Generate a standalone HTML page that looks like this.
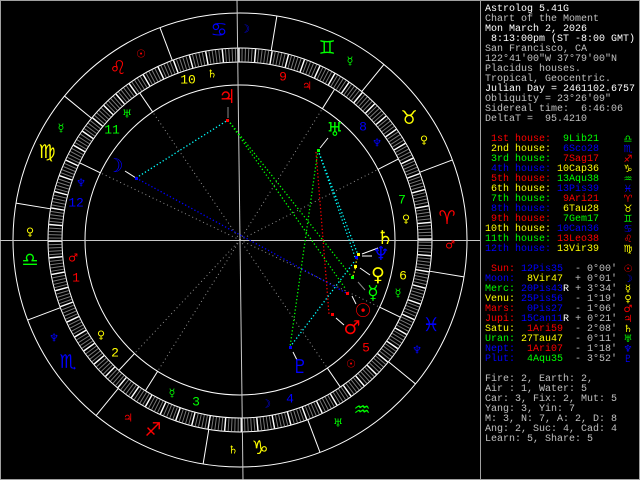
<!DOCTYPE html>
<html><head><meta charset="utf-8"><style>
html,body{margin:0;padding:0;background:#000;width:640px;height:480px;overflow:hidden}
svg{position:absolute;left:0;top:0}
.p{position:absolute;left:485px;font-family:"Liberation Mono",monospace;font-size:10px;line-height:10px;white-space:pre;color:#c0c0c0}
.w{color:#fff}.r{color:#f00}.y{color:#ff0}.g{color:#0f0}.b{color:#00f}
.gl{font-family:"DejaVu Sans",sans-serif;font-size:10px;position:absolute;left:622px;width:12px;text-align:center}
</style></head><body>
<svg width="640" height="480" xmlns="http://www.w3.org/2000/svg">
<rect x="0.5" y="0.5" width="639" height="479" fill="none" stroke="#a0a0a0"/>
<line x1="480.5" y1="0" x2="480.5" y2="480" stroke="#a0a0a0"/>
<g transform="translate(240,240)" fill="none">
<circle r="227" stroke="#fff"/>
<circle r="192" stroke="#fff"/>
<circle r="178" stroke="#fff"/>
<circle r="155" stroke="#fff"/>
<g transform="rotate(9.35)">
<circle r="185" stroke="#777" stroke-width="13" stroke-dasharray="1 2.2289"/>
<circle r="185" stroke="#fff" stroke-width="13" stroke-dasharray="1.4 14.7445"/>
</g>
<g stroke="#fff">
<line x1="192" x2="227" transform="rotate(9.35)"/><line x1="192" x2="227" transform="rotate(-20.65)"/>
<line x1="192" x2="227" transform="rotate(-50.65)"/><line x1="192" x2="227" transform="rotate(-80.65)"/>
<line x1="192" x2="227" transform="rotate(-110.65)"/><line x1="192" x2="227" transform="rotate(-140.65)"/>
<line x1="192" x2="227" transform="rotate(-170.65)"/><line x1="192" x2="227" transform="rotate(-200.65)"/>
<line x1="192" x2="227" transform="rotate(-230.65)"/><line x1="192" x2="227" transform="rotate(-260.65)"/>
<line x1="192" x2="227" transform="rotate(-290.65)"/><line x1="192" x2="227" transform="rotate(-320.65)"/>
<line x1="155" x2="178" transform="rotate(-227.1)"/><line x1="155" x2="178" transform="rotate(-237.9)"/>
<line x1="155" x2="178" transform="rotate(-304.3)"/><line x1="155" x2="178" transform="rotate(-334.3)"/>
<line x1="155" x2="178" transform="rotate(-27.1)"/><line x1="155" x2="178" transform="rotate(-57.9)"/>
<line x1="155" x2="178" transform="rotate(-124.3)"/><line x1="155" x2="178" transform="rotate(-154.3)"/>
</g>
<g stroke="#909090" stroke-dasharray="1 3">
<line x1="0" x2="155" transform="rotate(-227.1)"/><line x1="0" x2="155" transform="rotate(-237.9)"/>
<line x1="0" x2="155" transform="rotate(-304.3)"/><line x1="0" x2="155" transform="rotate(-334.3)"/>
<line x1="0" x2="155" transform="rotate(-27.1)"/><line x1="0" x2="155" transform="rotate(-57.9)"/>
<line x1="0" x2="155" transform="rotate(-124.3)"/><line x1="0" x2="155" transform="rotate(-154.3)"/>
</g>
</g>
<line x1="0" y1="240.5" x2="480" y2="240.5" stroke="#c8c8c8"/>
<line x1="237" y1="0" x2="243" y2="480" stroke="#c8c8c8"/>
<g fill="none" stroke-width="1.3" stroke-dasharray="1.3 2.2">
<line x1="136" y1="178" x2="228" y2="120" stroke="#0ff"/>
<line x1="136" y1="178" x2="348" y2="294" stroke="#00f"/>
<line x1="228" y1="120" x2="352" y2="277" stroke="#0f0"/>
<line x1="228" y1="120" x2="345" y2="288" stroke="#0f0"/>
<line x1="318" y1="150" x2="358" y2="255" stroke="#0ff"/>
<line x1="318" y1="150" x2="355" y2="257" stroke="#0ff"/>
<line x1="316" y1="152" x2="329" y2="314" stroke="#f00"/>
<line x1="318" y1="150" x2="290" y2="347" stroke="#0f0"/>
<line x1="290" y1="347" x2="354" y2="262" stroke="#0ff"/>
<line x1="355" y1="266" x2="358" y2="256" stroke="#ff0"/>
<line x1="353" y1="276" x2="356" y2="266" stroke="#ff0"/>
</g>
<g stroke="#fff" fill="none">
<line x1="136" y1="178" x2="125" y2="171"/>
<line x1="320" y1="148" x2="328" y2="138"/>
<line x1="228" y1="118" x2="228" y2="107" stroke="#888"/>
<line x1="362" y1="254" x2="378" y2="248"/>
<line x1="362" y1="256" x2="372" y2="256"/>
<line x1="360" y1="268" x2="370" y2="275"/>
<line x1="358" y1="282" x2="365" y2="290" stroke="#888"/>
<line x1="352" y1="296" x2="356" y2="304"/>
<line x1="336" y1="318" x2="344" y2="325"/>
<line x1="293" y1="352" x2="297" y2="360"/>
</g>
<g>
<rect x="226" y="119" width="3" height="3" fill="#f00"/><rect x="135" y="177" width="3" height="3" fill="#00f"/>
<rect x="317" y="149" width="3" height="3" fill="#0f0"/><rect x="346" y="292" width="3" height="3" fill="#f00"/>
<rect x="331" y="313" width="3" height="3" fill="#f00"/><rect x="289" y="346" width="3" height="3" fill="#00f"/>
<rect x="357" y="253" width="3" height="3" fill="#ff0"/><rect x="355" y="256" width="3" height="3" fill="#00f"/>
<rect x="354" y="265" width="3" height="3" fill="#ff0"/><rect x="351" y="276" width="3" height="3" fill="#0f0"/>
</g>
<g font-family="DejaVu Sans, sans-serif" text-anchor="middle" dominant-baseline="central">
<g font-size="19">
<text x="219" y="30" fill="#00f">♋&#xFE0E;</text><text x="118" y="68" fill="#f00">♌&#xFE0E;</text>
<text x="47" y="152" fill="#ff0">♍&#xFE0E;</text><text x="30" y="260" fill="#0f0">♎&#xFE0E;</text>
<text x="68" y="362" fill="#00f">♏&#xFE0E;</text><text x="153" y="430" fill="#f00">♐&#xFE0E;</text>
<text x="260" y="448" fill="#ff0">♑&#xFE0E;</text><text x="362" y="410" fill="#0f0">♒&#xFE0E;</text>
<text x="431" y="325" fill="#00f">♓&#xFE0E;</text><text x="447" y="218" fill="#f00">♈&#xFE0E;</text>
<text x="409" y="118" fill="#ff0">♉&#xFE0E;</text><text x="327" y="48" fill="#0f0">♊&#xFE0E;</text>
</g>
<g font-size="19">
<text x="227" y="97" fill="#f00">♃&#xFE0E;</text><text x="115" y="166" fill="#00f">☽&#xFE0E;</text>
<text x="335" y="130" fill="#0f0">♅&#xFE0E;</text><text x="385" y="238" fill="#ff0">♄&#xFE0E;</text>
<text x="381" y="254" fill="#00f">♆&#xFE0E;</text><text x="378" y="275" fill="#ff0">♀&#xFE0E;</text>
<text x="373" y="293" fill="#0f0">☿&#xFE0E;</text><text x="363" y="311" fill="#f00">☉&#xFE0E;</text>
<text x="352" y="328" fill="#f00">♂&#xFE0E;</text><text x="300" y="367" fill="#00f">♇&#xFE0E;</text>
</g>
<g font-size="11">
<text x="141" y="54" fill="#f00">☉&#xFE0E;</text><text x="212" y="74" fill="#ff0">♄&#xFE0E;</text>
<text x="127" y="114" fill="#0f0">♅&#xFE0E;</text><text x="61" y="128" fill="#0f0">☿&#xFE0E;</text>
<text x="81" y="183" fill="#00f">♆&#xFE0E;</text><text x="30" y="232" fill="#ff0">♀&#xFE0E;</text>
<text x="245" y="29" fill="#00f">☽&#xFE0E;</text><text x="350" y="61" fill="#0f0">☿&#xFE0E;</text>
<text x="307" y="86" fill="#f00">♃&#xFE0E;</text><text x="424" y="140" fill="#ff0">♀&#xFE0E;</text>
<text x="377" y="143" fill="#00f">♆&#xFE0E;</text><text x="406" y="219" fill="#ff0">♀&#xFE0E;</text>
<text x="73" y="258" fill="#f00">♂&#xFE0E;</text><text x="54" y="338" fill="#00f">♆&#xFE0E;</text>
<text x="101" y="335" fill="#ff0">♀&#xFE0E;</text><text x="172" y="393" fill="#0f0">☿&#xFE0E;</text>
<text x="128" y="418" fill="#f00">♃&#xFE0E;</text><text x="233" y="450" fill="#ff0">♄&#xFE0E;</text>
<text x="450" y="245" fill="#f00">♂&#xFE0E;</text><text x="398" y="293" fill="#0f0">☿&#xFE0E;</text>
<text x="417" y="350" fill="#00f">♆&#xFE0E;</text><text x="351" y="364" fill="#f00">☉&#xFE0E;</text>
<text x="266" y="404" fill="#00f">☽&#xFE0E;</text><text x="338" y="423" fill="#0f0">♅&#xFE0E;</text>
</g>
</g>
<g font-family="Liberation Mono, monospace" font-size="13" text-anchor="middle" dominant-baseline="central">
<text x="76" y="278" fill="#f00">1</text><text x="115" y="353" fill="#ff0">2</text>
<text x="196" y="402" fill="#0f0">3</text><text x="290" y="399" fill="#00f">4</text>
<text x="366" y="348" fill="#f00">5</text><text x="403" y="276" fill="#ff0">6</text>
<text x="402" y="200" fill="#0f0">7</text><text x="363" y="127" fill="#00f">8</text>
<text x="283" y="77" fill="#f00">9</text><text x="188" y="80" fill="#ff0">10</text>
<text x="112" y="130" fill="#0f0">11</text><text x="76" y="203" fill="#00f">12</text>
</g>
</svg>
<div class="p w" style="top:5px">Astrolog 5.41G</div>
<div class="p" style="top:15px">Chart of the Moment</div>
<div class="p w" style="top:25px">Mon March 2, 2026</div>
<div class="p w" style="top:35px"> 8:13:00pm (ST -8:00 GMT)</div>
<div class="p" style="top:45px">San Francisco, CA</div>
<div class="p" style="top:55px">122°41'00"W 37°79'00"N</div>
<div class="p" style="top:65px">Placidus houses.</div>
<div class="p" style="top:75px">Tropical, Geocentric.</div>
<div class="p w" style="top:85px">Julian Day = 2461102.6757</div>
<div class="p" style="top:95px">Obliquity = 23°26'09"</div>
<div class="p" style="top:105px">Sidereal time:  6:46:06</div>
<div class="p" style="top:115px">DeltaT =  95.4210</div>

<div class="p" style="top:135px"><span class="r"> 1st house:</span>  <span class="g">9Lib21</span></div><div class="gl g" style="top:134px">♎&#xFE0E;</div>
<div class="p" style="top:145px"><span class="y"> 2nd house:</span>  <span class="b">6Sco28</span></div><div class="gl b" style="top:144px">♏&#xFE0E;</div>
<div class="p" style="top:155px"><span class="g"> 3rd house:</span>  <span class="r">7Sag17</span></div><div class="gl r" style="top:154px">♐&#xFE0E;</div>
<div class="p" style="top:165px"><span class="b"> 4th house:</span> <span class="y">10Cap36</span></div><div class="gl y" style="top:164px">♑&#xFE0E;</div>
<div class="p" style="top:175px"><span class="r"> 5th house:</span> <span class="g">13Aqu38</span></div><div class="gl g" style="top:174px">♒&#xFE0E;</div>
<div class="p" style="top:185px"><span class="y"> 6th house:</span> <span class="b">13Pis39</span></div><div class="gl b" style="top:184px">♓&#xFE0E;</div>
<div class="p" style="top:195px"><span class="g"> 7th house:</span>  <span class="r">9Ari21</span></div><div class="gl r" style="top:194px">♈&#xFE0E;</div>
<div class="p" style="top:205px"><span class="b"> 8th house:</span>  <span class="y">6Tau28</span></div><div class="gl y" style="top:204px">♉&#xFE0E;</div>
<div class="p" style="top:215px"><span class="r"> 9th house:</span>  <span class="g">7Gem17</span></div><div class="gl g" style="top:214px">♊&#xFE0E;</div>
<div class="p" style="top:225px"><span class="y">10th house:</span> <span class="b">10Can36</span></div><div class="gl b" style="top:224px">♋&#xFE0E;</div>
<div class="p" style="top:235px"><span class="g">11th house:</span> <span class="r">13Leo38</span></div><div class="gl r" style="top:234px">♌&#xFE0E;</div>
<div class="p" style="top:245px"><span class="b">12th house:</span> <span class="y">13Vir39</span></div><div class="gl y" style="top:244px">♍&#xFE0E;</div>

<div class="p" style="top:265px"><span class="r"> Sun:</span> <span class="b">12Pis35</span>  - 0°00'</div><div class="gl r" style="top:264px">☉&#xFE0E;</div>
<div class="p" style="top:275px"><span class="b">Moon:</span>  <span class="y">8Vir47</span>  + 0°01'</div><div class="gl b" style="top:274px">☽&#xFE0E;</div>
<div class="p" style="top:285px"><span class="g">Merc:</span> <span class="b">20Pis43</span><span class="w">R</span> + 3°34'</div><div class="gl y" style="top:284px">☿&#xFE0E;</div>
<div class="p" style="top:295px"><span class="y">Venu:</span> <span class="b">25Pis56</span>  - 1°19'</div><div class="gl y" style="top:294px">♀&#xFE0E;</div>
<div class="p" style="top:305px"><span class="r">Mars:</span>  <span class="b">0Pis27</span>  - 1°06'</div><div class="gl r" style="top:304px">♂&#xFE0E;</div>
<div class="p" style="top:315px"><span class="r">Jupi:</span> <span class="b">15Can11</span><span class="w">R</span> + 0°21'</div><div class="gl r" style="top:314px">♃&#xFE0E;</div>
<div class="p" style="top:325px"><span class="y">Satu:</span>  <span class="r">1Ari59</span>  - 2°08'</div><div class="gl y" style="top:324px">♄&#xFE0E;</div>
<div class="p" style="top:335px"><span class="g">Uran:</span> <span class="y">27Tau47</span>  - 0°11'</div><div class="gl g" style="top:334px">♅&#xFE0E;</div>
<div class="p" style="top:345px"><span class="b">Nept:</span>  <span class="r">1Ari07</span>  - 1°18'</div><div class="gl b" style="top:344px">♆&#xFE0E;</div>
<div class="p" style="top:355px"><span class="b">Plut:</span>  <span class="g">4Aqu35</span>  - 3°52'</div><div class="gl b" style="top:354px">♇&#xFE0E;</div>

<div class="p" style="top:375px">Fire: 2, Earth: 2,</div>
<div class="p" style="top:385px">Air : 1, Water: 5</div>
<div class="p" style="top:395px">Car: 3, Fix: 2, Mut: 5</div>
<div class="p" style="top:405px">Yang: 3, Yin: 7</div>
<div class="p" style="top:415px">M: 3, N: 7, A: 2, D: 8</div>
<div class="p" style="top:425px">Ang: 2, Suc: 4, Cad: 4</div>
<div class="p" style="top:435px">Learn: 5, Share: 5</div>
</body></html>
